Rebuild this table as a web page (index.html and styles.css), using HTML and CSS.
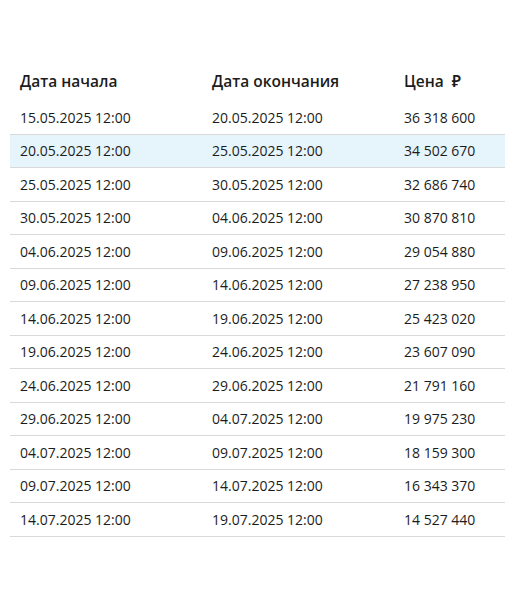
FILE: index.html
```html
<!DOCTYPE html>
<html lang="ru">
<head>
    <meta charset="UTF-8" />
    <title>Периоды и цены</title>
    <link rel="stylesheet" href="styles.css">
</head>
<body>
    <div class="wrap">
        <table class="prices">
            <thead>
                <tr>
                    <th class="col-start">Дата начала</th>
                    <th class="col-end">Дата окончания</th>
                    <th class="col-price">Цена&nbsp; ₽</th>
                </tr>
            </thead>
            <tbody>
                <tr><td>15.05.2025 12:00</td><td>20.05.2025 12:00</td><td>36 318 600</td></tr>
                <tr class="active"><td>20.05.2025 12:00</td><td>25.05.2025 12:00</td><td>34 502 670</td></tr>
                <tr><td>25.05.2025 12:00</td><td>30.05.2025 12:00</td><td>32 686 740</td></tr>
                <tr><td>30.05.2025 12:00</td><td>04.06.2025 12:00</td><td>30 870 810</td></tr>
                <tr><td>04.06.2025 12:00</td><td>09.06.2025 12:00</td><td>29 054 880</td></tr>
                <tr><td>09.06.2025 12:00</td><td>14.06.2025 12:00</td><td>27 238 950</td></tr>
                <tr><td>14.06.2025 12:00</td><td>19.06.2025 12:00</td><td>25 423 020</td></tr>
                <tr><td>19.06.2025 12:00</td><td>24.06.2025 12:00</td><td>23 607 090</td></tr>
                <tr><td>24.06.2025 12:00</td><td>29.06.2025 12:00</td><td>21 791 160</td></tr>
                <tr><td>29.06.2025 12:00</td><td>04.07.2025 12:00</td><td>19 975 230</td></tr>
                <tr><td>04.07.2025 12:00</td><td>09.07.2025 12:00</td><td>18 159 300</td></tr>
                <tr><td>09.07.2025 12:00</td><td>14.07.2025 12:00</td><td>16 343 370</td></tr>
                <tr><td>14.07.2025 12:00</td><td>19.07.2025 12:00</td><td>14 527 440</td></tr>
            </tbody>
        </table>
    </div>
</body>
</html>
```

FILE: styles.css
```css
body {
    margin: 0;
    background-color: #fff;
    color: #1c1c1c;
    font-family: 'Open Sans', 'Noto Sans', sans-serif;
}

.wrap {
    padding: 60px 5px 0 10px;
}

.prices {
    width: 100%;
    border-collapse: collapse;
    table-layout: fixed;
}

.col-start,
.col-end {
    width: 172px;
}

.prices th {
    text-align: left;
    font-size: 15.5px;
    font-weight: 600;
    padding: 0 10px;
    height: 41px;
    vertical-align: middle;
    white-space: nowrap;
}

.prices td {
    font-size: 14px;
    padding: 0 10px;
    height: 32.5px;
    border-bottom: 1px solid #d9d9d9;
    white-space: nowrap;
}

.prices tr.active td {
    background-color: #e6f4fc;
}
```
